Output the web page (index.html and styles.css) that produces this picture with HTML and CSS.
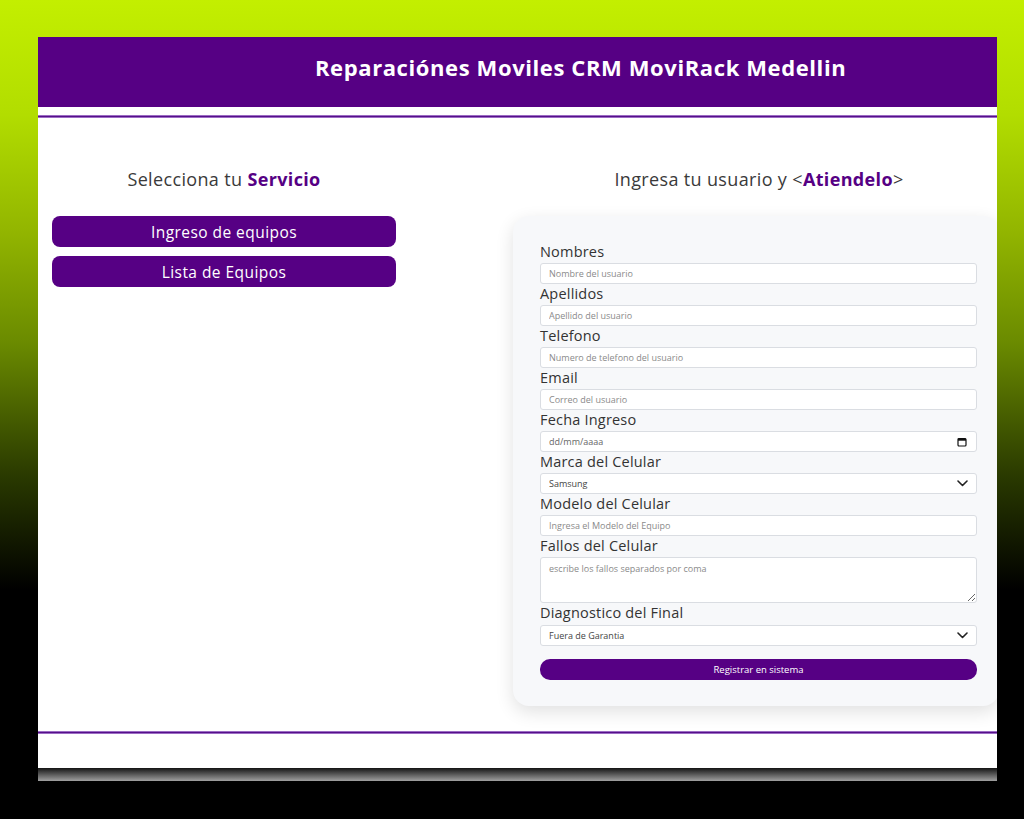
FILE: index.html
```html
<!DOCTYPE html>
<html lang="es">
<head>
<meta charset="utf-8">
<title>Reparaciones Moviles CRM</title>
<link rel="stylesheet" href="styles.css">
</head>
<body>
<div class="page">
  <div class="frame">
    <header class="topbar">
      <h1 class="title">Reparaciónes Moviles CRM MoviRack Medellin</h1>
    </header>
    <div class="rule"></div>
    <main class="content">
      <section class="services">
        <h2 class="heading">Selecciona tu <strong>Servicio</strong></h2>
        <button class="svc-btn">Ingreso de equipos</button>
        <button class="svc-btn">Lista de Equipos</button>
      </section>
      <section class="register">
        <h2 class="heading">Ingresa tu usuario y &lt;<strong>Atiendelo</strong>&gt;</h2>
        <form class="card">
          <label class="lbl">Nombres</label>
          <input class="field" type="text" placeholder="Nombre del usuario">
          <label class="lbl">Apellidos</label>
          <input class="field" type="text" placeholder="Apellido del usuario">
          <label class="lbl">Telefono</label>
          <input class="field" type="text" placeholder="Numero de telefono del usuario">
          <label class="lbl">Email</label>
          <input class="field" type="text" placeholder="Correo del usuario">
          <label class="lbl">Fecha Ingreso</label>
          <div class="field fake">
            <span class="date-text">dd/mm/aaaa</span>
            <svg class="cal" width="10" height="10" viewBox="0 0 10 10"><rect x="1" y="1.5" width="8" height="7.5" rx="1" fill="none" stroke="#111" stroke-width="1.2"/><rect x="1" y="1.5" width="8" height="2.2" fill="#111"/></svg>
          </div>
          <label class="lbl">Marca del Celular</label>
          <div class="sel-wrap">
            <select class="field sel"><option>Samsung</option></select>
            <svg class="chev" width="11" height="7" viewBox="0 0 11 7"><path d="M1 1l4.5 4.5L10 1" fill="none" stroke="#222" stroke-width="1.6" stroke-linecap="round" stroke-linejoin="round"/></svg>
          </div>
          <label class="lbl">Modelo del Celular</label>
          <input class="field" type="text" placeholder="Ingresa el Modelo del Equipo">
          <label class="lbl">Fallos del Celular</label>
          <textarea class="field area" placeholder="escribe los fallos separados por coma"></textarea>
          <label class="lbl lbl-last">Diagnostico del Final</label>
          <div class="sel-wrap">
            <select class="field sel"><option>Fuera de Garantia</option></select>
            <svg class="chev" width="11" height="7" viewBox="0 0 11 7"><path d="M1 1l4.5 4.5L10 1" fill="none" stroke="#222" stroke-width="1.6" stroke-linecap="round" stroke-linejoin="round"/></svg>
          </div>
          <button type="button" class="submit">Registrar en sistema</button>
        </form>
      </section>
    </main>
    <div class="rule bottom"></div>
    <footer class="foot"></footer>
  </div>
  <div class="band"></div>
</div>
</body>
</html>
```
FILE: styles.css
```css
* { box-sizing: border-box; }
html, body { margin: 0; padding: 0; }
body {
  width: 1024px;
  height: 819px;
  overflow: hidden;
  font-family: "Open Sans", "Noto Sans", sans-serif;
  background: linear-gradient(180deg, #c3ef00 0%, #b2dd00 14%, #93b600 28%, #6a8a00 42%, #2a3a00 58%, #000 72%, #000 100%);
}
.page {
  padding: 37px 27px 0 38px;
}
.frame {
  width: 959px;
  height: 731px;
  background: #fff;
  overflow: hidden;
  display: flex;
  flex-direction: column;
}
.band {
  width: 959px;
  height: 13px;
  background: linear-gradient(180deg, #141414 0%, #5a5a5a 50%, #a0a0a0 100%);
}
.topbar {
  height: 70px;
  background: #560084;
  display: flex;
  align-items: center;
  padding-left: 277px;
  padding-bottom: 10px;
}
.title {
  margin: 0;
  color: #fff;
  font-size: 22px;
  font-weight: 700;
  letter-spacing: 0.6px;
}
.rule {
  margin-top: 8px;
  height: 3px;
  background: #55108a;
  border-top: 1px solid #9c6bc4;
  border-bottom: 1px solid #9c6bc4;
}
.rule.bottom { margin-top: 0; }
.content {
  height: 613px;
  display: grid;
  grid-template-columns: 344px 484px;
  column-gap: 117px;
  padding-left: 14px;
}
.heading {
  margin: 0;
  height: 98px;
  padding-top: 49px;
  text-align: center;
  font-size: 18px;
  font-weight: 400;
  letter-spacing: 0.35px;
  color: #3a3a3a;
}
.heading strong {
  color: #560084;
  font-weight: 700;
}
.services {
  display: flex;
  flex-direction: column;
}
.svc-btn {
  height: 31px;
  margin-bottom: 9px;
  border: none;
  border-radius: 8px;
  background: #560084;
  color: #fff;
  font-family: inherit;
  font-size: 15.5px;
  letter-spacing: 0.45px;
}
.register .heading { padding-left: 8px; }
.card {
  width: 486px;
  background: #f7f8fa;
  border-radius: 16px;
  box-shadow: 0 6px 18px rgba(0,0,0,0.12);
  padding: 26px 18px 26px 27px;
  display: flex;
  flex-direction: column;
}
.lbl {
  height: 21px;
  line-height: 20px;
  font-size: 14.5px;
  letter-spacing: 0.2px;
  color: #333;
}
.lbl-last { height: 22px; }
.field {
  display: block;
  height: 21px;
  width: 437px;
  border: 1px solid #dadde2;
  border-radius: 3px;
  background: #fff;
  padding: 0 8px;
  font-family: inherit;
  font-size: 9px;
  color: #333;
  outline: none;
}
.field::placeholder { color: #8a8a8a; }
.fake {
  display: flex;
  align-items: center;
  justify-content: space-between;
  padding-right: 9px;
}
.date-text { color: #666; font-size: 9px; }
.sel-wrap { position: relative; width: 437px; height: 21px; }
.sel {
  appearance: none;
  -webkit-appearance: none;
  color: #444;
}
.chev {
  position: absolute;
  right: 9px;
  top: 7px;
  pointer-events: none;
}
.area {
  height: 46px;
  padding-top: 4px;
  resize: vertical;
}
.submit {
  margin-top: 13px;
  height: 21px;
  width: 437px;
  border: none;
  border-radius: 10px;
  background: #560084;
  color: #fff;
  font-family: inherit;
  font-size: 9.5px;
  font-weight: 500;
}
.foot { flex: 1; }
```
